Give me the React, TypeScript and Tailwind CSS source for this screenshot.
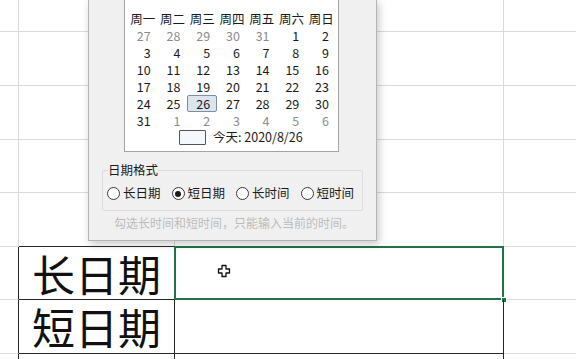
import React from "react";

const font = { fontFamily: '"Noto Sans CJK SC", "Noto Sans", sans-serif' };

const weeks: [string, boolean][][] = [
  [["27", true], ["28", true], ["29", true], ["30", true], ["31", true], ["1", false], ["2", false]],
  [["3", false], ["4", false], ["5", false], ["6", false], ["7", false], ["8", false], ["9", false]],
  [["10", false], ["11", false], ["12", false], ["13", false], ["14", false], ["15", false], ["16", false]],
  [["17", false], ["18", false], ["19", false], ["20", false], ["21", false], ["22", false], ["23", false]],
  [["24", false], ["25", false], ["26", false], ["27", false], ["28", false], ["29", false], ["30", false]],
  [["31", false], ["1", true], ["2", true], ["3", true], ["4", true], ["5", true], ["6", true]],
];

const heads = ["周一", "周二", "周三", "周四", "周五", "周六", "周日"];

function Radio({ label, checked }: { label: string; checked?: boolean }) {
  return (
    <div className="flex items-center h-[17px]">
      <span className="w-[13px] h-[13px] rounded-full border border-[#3a3a3a] bg-white flex items-center justify-center">
        {checked && <span className="w-[6px] h-[6px] rounded-full bg-[#1a1a1a]" />}
      </span>
      <span className="ml-[3px] text-[12.5px] leading-none text-[#1a1a1a]">{label}</span>
    </div>
  );
}

function Calendar() {
  return (
    <div className="ml-[35px] w-[215px] bg-white border-x border-b border-[#a5a5a5] pt-[10px] pb-[5px]">
      <div className="grid grid-cols-7 w-[208px] ml-[3px] text-[12.5px] text-[#1a1a1a]">
        {heads.map((h) => (
          <div key={h} className="h-[17px] leading-[17px] text-center">
            {h}
          </div>
        ))}
        {weeks.map((w, i) =>
          w.map(([d, other], j) => {
            const sel = i === 4 && j === 2;
            return (
              <div
                key={i + "-" + j}
                className={
                  sel
                    ? "h-[17px] leading-[15px] text-right pr-[6px] bg-[#dce4ee] border border-[#7b8da2] rounded-[2px]"
                    : "h-[17px] leading-[17px] text-right pr-[7px] " + (other ? "text-[#8c8c8c]" : "")
                }
              >
                {d}
              </div>
            );
          })
        )}
      </div>
      <div className="flex items-center h-[17px] pl-[54px] text-[12.5px] text-[#1a1a1a]">
        <span className="w-[27px] h-[15px] border border-[#555] bg-[#f4f8fb] rounded-[1px]" />
        <span className="ml-[7px]">今天: 2020/8/26</span>
      </div>
    </div>
  );
}

function Dialog() {
  return (
    <div
      className="absolute left-[88px] top-0 w-[289px] h-[241px] bg-[#f0f0f0] border-x border-b border-[#b4b4b4] shadow-[2px_3px_8px_rgba(0,0,0,0.22)]"
      style={font}
    >
      <Calendar />
      <fieldset className="min-w-0 ml-[13px] mr-[13px] mt-[9px] border border-[#dcdcdc] rounded-[2px] px-[5px] pb-[8px]">
        <legend className="text-[12.5px] text-[#1a1a1a] leading-[18px]">日期格式</legend>
        <div className="flex gap-[11px] mt-[6px] -ml-[1px]">
          <Radio label="长日期" />
          <Radio label="短日期" checked />
          <Radio label="长时间" />
          <Radio label="短时间" />
        </div>
      </fieldset>
      <div className="pl-[25px] mt-[3px] text-[12px] leading-[18px] text-[#bcbcbc]">
        勾选长时间和短时间，只能输入当前的时间。
      </div>
    </div>
  );
}

const gray = "border-[#dadada]";
const dark = "border-[#262626]";

function Row({
  h,
  a = gray,
  bR = gray,
  bB = gray,
  cR = gray,
  cB = gray,
  bText,
  selected,
}: {
  h: string;
  a?: string;
  bR?: string;
  bB?: string;
  cR?: string;
  cB?: string;
  bText?: string;
  selected?: boolean;
}) {
  return (
    <div className={"flex " + h}>
      <div className={"w-[19px] border-b border-r border-b-[#dadada] " + (a === dark ? "border-r-[#262626]" : "border-r-[#dadada]")} />
      <div
        className={
          "w-[156px] border-b border-r flex items-center justify-end pr-[13px] text-[43px] leading-none text-[#111] " +
          (bR === dark ? "border-r-[#262626] " : "border-r-[#dadada] ") +
          (bB === dark ? "border-b-[#262626]" : "border-b-[#dadada]")
        }
      >
        {bText}
      </div>
      <div
        className={
          "relative w-[329px] border-b border-r " +
          (cR === dark ? "border-r-[#262626] " : "border-r-[#dadada] ") +
          (cB === dark ? "border-b-[#262626]" : "border-b-[#dadada]")
        }
      >
        {selected && (
          <>
            <div className="absolute -left-[1px] -top-[1px] -right-[1px] -bottom-[1px] border-2 border-[#217346]" />
            <div className="absolute -right-[4px] -bottom-[4px] w-[6px] h-[6px] bg-[#217346] border border-white" />
            <svg className="absolute left-[42px] top-[17px]" width="14" height="14" viewBox="0 0 14 14">
              <path
                d="M5 1.5h4v3.5h3.5v4H9v3.5H5V9H1.5V5H5z"
                fill="white"
                stroke="#111"
                strokeWidth="1.3"
                strokeLinejoin="round"
              />
            </svg>
          </>
        )}
      </div>
      <div className="flex-1 border-b border-[#dadada]" />
    </div>
  );
}

export default function App() {
  return (
    <div className="relative w-[576px] h-[359px] overflow-hidden bg-white" style={font}>
      <Row h="h-[32px]" />
      <Row h="h-[54px]" />
      <Row h="h-[54px]" />
      <Row h="h-[53px]" />
      <Row h="h-[54px]" bB={dark} cB={dark} />
      <Row h="h-[53px]" a={dark} bR={dark} bB={dark} cR={dark} cB={dark} bText="长日期" selected />
      <Row h="h-[54px]" a={dark} bR={dark} bB={dark} cR={dark} cB={dark} bText="短日期" />
      <Row h="h-[54px]" a={dark} bR={dark} cR={dark} />
      <Dialog />
    </div>
  );
}
